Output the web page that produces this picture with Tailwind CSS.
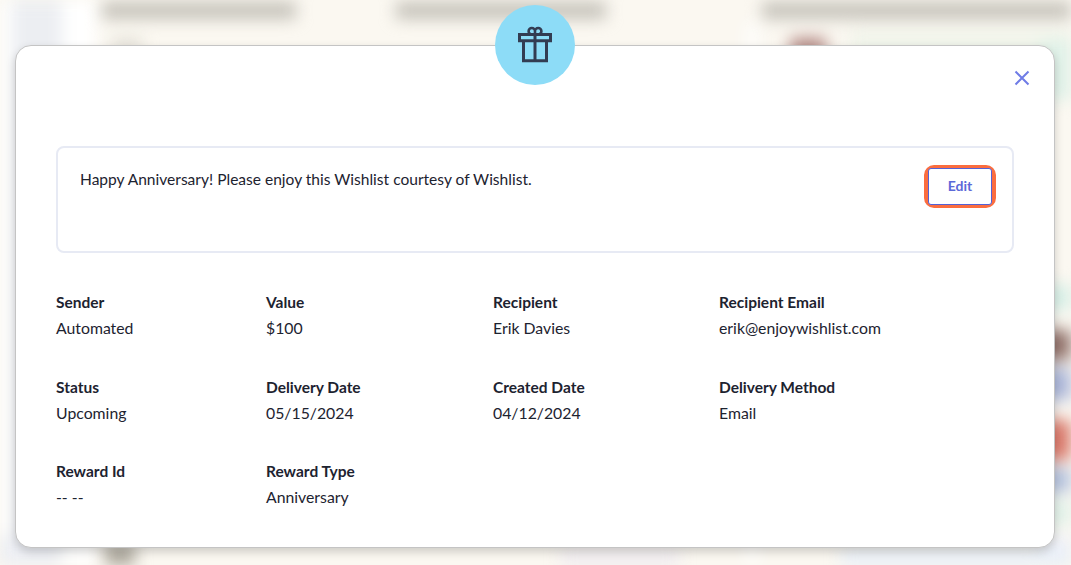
<!DOCTYPE html>
<html>
<head>
<meta charset="utf-8">
<script src="https://cdn.jsdelivr.net/npm/@tailwindcss/browser@4"></script>
</head>
<body class="m-0">
<div class="relative w-[1071px] h-[565px] overflow-hidden bg-[#fbf8f1] font-['Lato','Liberation_Sans',sans-serif] text-[#1d2330]">
  <div aria-hidden="true" class="absolute inset-0 blur-[8px]">
    <div class="absolute left-0 top-0 w-[62px] h-[565px] bg-[#eceef2]"></div>
    <div class="absolute left-0 top-0 w-[12px] h-[565px] bg-white"></div>
    <div class="absolute left-[62px] top-0 w-[34px] h-[565px] bg-white"></div>
    <div class="absolute left-[102px] top-[2px] w-[194px] h-[17px] bg-[#c4c1b9]"></div>
    <div class="absolute left-[396px] top-[2px] w-[210px] h-[17px] bg-[#c4c1b9]"></div>
    <div class="absolute left-[762px] top-[2px] w-[309px] h-[17px] bg-[#c4c1b9]"></div>
    <div class="absolute left-[745px] top-[22px] w-[14px] h-[543px] bg-white/70"></div>
    <div class="absolute left-[790px] top-[38px] w-[36px] h-[20px] bg-[#b08580]"></div>
    <div class="absolute left-[112px] top-[40px] w-[30px] h-[10px] bg-[#d8d5cc]"></div>
    <div class="absolute left-[850px] top-[30px] w-[221px] h-[70px] bg-[#f0f4ea]"></div>
    <div class="absolute left-[1040px] top-[40px] w-[31px] h-[60px] bg-[#dff1e8]"></div>
    <div class="absolute left-[1040px] top-[285px] w-[31px] h-[25px] bg-[#d5eee6]"></div>
    <div class="absolute left-[1040px] top-[330px] w-[31px] h-[30px] bg-[#8f6f68]"></div>
    <div class="absolute left-[1040px] top-[368px] w-[31px] h-[32px] bg-[#a9b4d8]"></div>
    <div class="absolute left-[1040px] top-[420px] w-[31px] h-[40px] bg-[#d9786a]"></div>
    <div class="absolute left-[1040px] top-[468px] w-[31px] h-[24px] bg-[#b0bfdc]"></div>
    <div class="absolute left-[1040px] top-[500px] w-[31px] h-[25px] bg-[#dff0e8]"></div>
    <div class="absolute left-[1040px] top-[535px] w-[31px] h-[30px] bg-[#eef0f8]"></div>
    <div class="absolute left-[105px] top-[545px] w-[30px] h-[20px] bg-[#a8a397]"></div>
    <div class="absolute left-[560px] top-[550px] w-[120px] h-[15px] bg-[#eeeaf0]"></div>
    <div class="absolute left-[840px] top-[550px] w-[231px] h-[15px] bg-[#e6eef8]"></div>
    <div class="absolute left-0 top-[535px] w-[50px] h-[30px] bg-[#eceef4]"></div>
  </div>

  <div class="relative ml-[15px] mt-[45px] w-[1040px] h-[503px] bg-white rounded-2xl border border-[#c4c4c4] shadow-[0_4px_10px_rgba(0,0,0,0.18)] px-10 pt-[100px]">
    <div class="flex items-start justify-between h-[107px] rounded-lg border-2 border-[#e7eaf4] pl-[22px] pr-4 pt-[22px] w-[958px]">
      <p class="text-[15.55px] leading-[20px] -mt-[1px]">Happy Anniversary! Please enjoy this Wishlist courtesy of Wishlist.</p>
      <div class="rounded-[10px] border-x-4 border-y-[3px] border-[#fb6d3f] -mt-[5px]">
        <button class="flex items-center justify-center w-[64px] h-[37px] pb-[2px] rounded-[3px] border border-[#5461d6] text-[#5c69d8] text-sm font-bold bg-white">Edit</button>
      </div>
    </div>

    <div class="mt-[36px] w-[958px] grid grid-cols-[210px_227px_226px_1fr] gap-y-[32.5px] text-[15.8px] leading-[26px]">
      <div><div class="font-bold text-[15.5px]">Sender</div><div>Automated</div></div>
      <div><div class="font-bold text-[15.5px]">Value</div><div>$100</div></div>
      <div><div class="font-bold text-[15.5px]">Recipient</div><div>Erik Davies</div></div>
      <div><div class="font-bold text-[15.5px]">Recipient Email</div><div>erik@enjoywishlist.com</div></div>
      <div><div class="font-bold text-[15.5px]">Status</div><div>Upcoming</div></div>
      <div><div class="font-bold text-[15.5px]">Delivery Date</div><div>05/15/2024</div></div>
      <div><div class="font-bold text-[15.5px]">Created Date</div><div>04/12/2024</div></div>
      <div><div class="font-bold text-[15.5px]">Delivery Method</div><div>Email</div></div>
      <div><div class="font-bold text-[15.5px]">Reward Id</div><div>-- --</div></div>
      <div><div class="font-bold text-[15.5px]">Reward Type</div><div>Anniversary</div></div>
    </div>

    <button class="absolute top-[22px] right-[22px] w-[20px] h-[20px] flex items-center justify-center text-[#6f7ce6]" aria-label="Close">
      <svg width="20" height="20" viewBox="0 0 20 20" fill="none" stroke="currentColor" stroke-width="2"><path d="M3.500 3.500 16.500 16.500M16.500 3.500 3.500 16.500"/></svg>
    </button>

    <div class="absolute left-[479px] top-[-41px] w-[80px] h-[80px] rounded-full bg-[#8ddcf7] flex items-center justify-center">
      <svg width="36" height="38" viewBox="0 0 36 38" fill="none" stroke="#323c52" stroke-width="3">
        <path d="M2.500 8.500h31v6.200h-31z"/>
        <path d="M6.500 14.700v20h23v-20"/>
        <path d="M18 8.500v26.200"/>
        <path d="M18 8V5.200a3.200 3.200 0 1 0-3.200 3.200H18zM18 8V5.200a3.200 3.200 0 1 1 3.200 3.200H18z" stroke-width="2.600"/>
      </svg>
    </div>
  </div>
</div>
</body>
</html>
